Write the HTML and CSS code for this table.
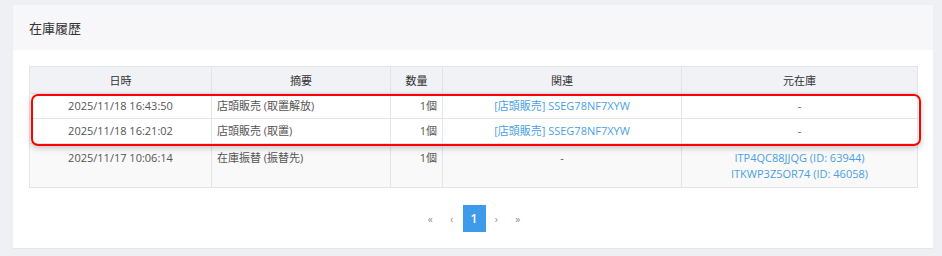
FILE: index.html
```html
<!DOCTYPE html>
<html lang="ja">
<head>
<meta charset="utf-8">
<link rel="stylesheet" href="styles.css">
</head>
<body>
<div class="card">
  <div class="card-header">在庫履歴</div>
  <div class="card-body">
    <div class="table-wrap">
      <table class="history">
        <colgroup>
          <col class="c-date"><col class="c-sum"><col class="c-qty"><col class="c-rel"><col class="c-src">
        </colgroup>
        <thead>
          <tr><th>日時</th><th>摘要</th><th>数量</th><th>関連</th><th>元在庫</th></tr>
        </thead>
        <tbody>
          <tr>
            <td class="center">2025/11/18 16:43:50</td>
            <td>店頭販売 (取置解放)</td>
            <td class="right">1個</td>
            <td class="center"><a class="link">[店頭販売] SSEG78NF7XYW</a></td>
            <td class="center">-</td>
          </tr>
          <tr>
            <td class="center">2025/11/18 16:21:02</td>
            <td>店頭販売 (取置)</td>
            <td class="right">1個</td>
            <td class="center"><a class="link">[店頭販売] SSEG78NF7XYW</a></td>
            <td class="center">-</td>
          </tr>
          <tr class="tall striped">
            <td class="center">2025/11/17 10:06:14</td>
            <td>在庫振替 (振替先)</td>
            <td class="right">1個</td>
            <td class="center">-</td>
            <td class="center"><a class="link">ITP4QC88JJQG (ID: 63944)</a><br><a class="link">ITKWP3Z5OR74 (ID: 46058)</a></td>
          </tr>
        </tbody>
      </table>
      <div class="highlight"></div>
    </div>
    <nav class="pager">
      <span class="pg">«</span>
      <span class="pg">‹</span>
      <span class="pg active">1</span>
      <span class="pg">›</span>
      <span class="pg">»</span>
    </nav>
  </div>
</div>
</body>
</html>
```
FILE: styles.css
```css
html, body {
  margin: 0;
  padding: 0;
}
body {
  background: #eef0f4;
  font-family: "Open Sans", "Noto Sans CJK JP", sans-serif;
  color: #555;
  padding: 5px 9px 9px 13px;
}
.card {
  background: #fff;
  box-shadow: 0 1px 1px rgba(0,0,0,0.04);
}
.card-header {
  height: 45px;
  box-sizing: border-box;
  background: #f7f7f9;
  padding: 0 16px;
  display: flex;
  align-items: center;
  font-size: 13px;
  color: #333;
}
.card-body {
  padding: 16px 16px 16px 16px;
}
.table-wrap {
  position: relative;
}
.history {
  width: 888px;
  border-collapse: collapse;
  table-layout: fixed;
  font-size: 11px;
}
.c-date { width: 182px; }
.c-sum { width: 179px; }
.c-qty { width: 52px; }
.c-rel { width: 239px; }
.c-src { width: 236px; }
.history th {
  background: #f1f2f6;
  color: #333;
  font-weight: normal;
  height: 26px;
  padding: 0 5px;
  border: 1px solid #e2e4ea;
  text-align: center;
}
.history td {
  border: 1px solid #e2e4ea;
  padding: 4px 5px;
  line-height: 16px;
  vertical-align: top;
  color: #555;
  white-space: nowrap;
}
.history tr.tall td {
  padding: 6px 5px 5px;
}
.history tr.striped td {
  background: #f9f9f9;
}
.center { text-align: center; }
.right { text-align: right; }
.link {
  color: #4a9fe3;
  text-decoration: none;
}
.highlight {
  position: absolute;
  left: 2px;
  top: 28px;
  width: 890px;
  height: 52px;
  box-sizing: border-box;
  border: 2px solid #ff0000;
  border-radius: 7px;
  box-shadow: 0 2px 6px rgba(0,0,0,0.22);
  pointer-events: none;
}
.pager {
  display: flex;
  justify-content: center;
  align-items: center;
  margin-top: 17px;
  height: 27px;
  padding-left: 2px;
}
.pg {
  width: 21.5px;
  height: 27px;
  display: flex;
  align-items: center;
  justify-content: center;
  font-size: 10px;
  color: #8a8f99;
}
.pg.active {
  width: 23px;
  background: #3d9be9;
  color: #fff;
  font-size: 12px;
  font-weight: 600;
}
```
